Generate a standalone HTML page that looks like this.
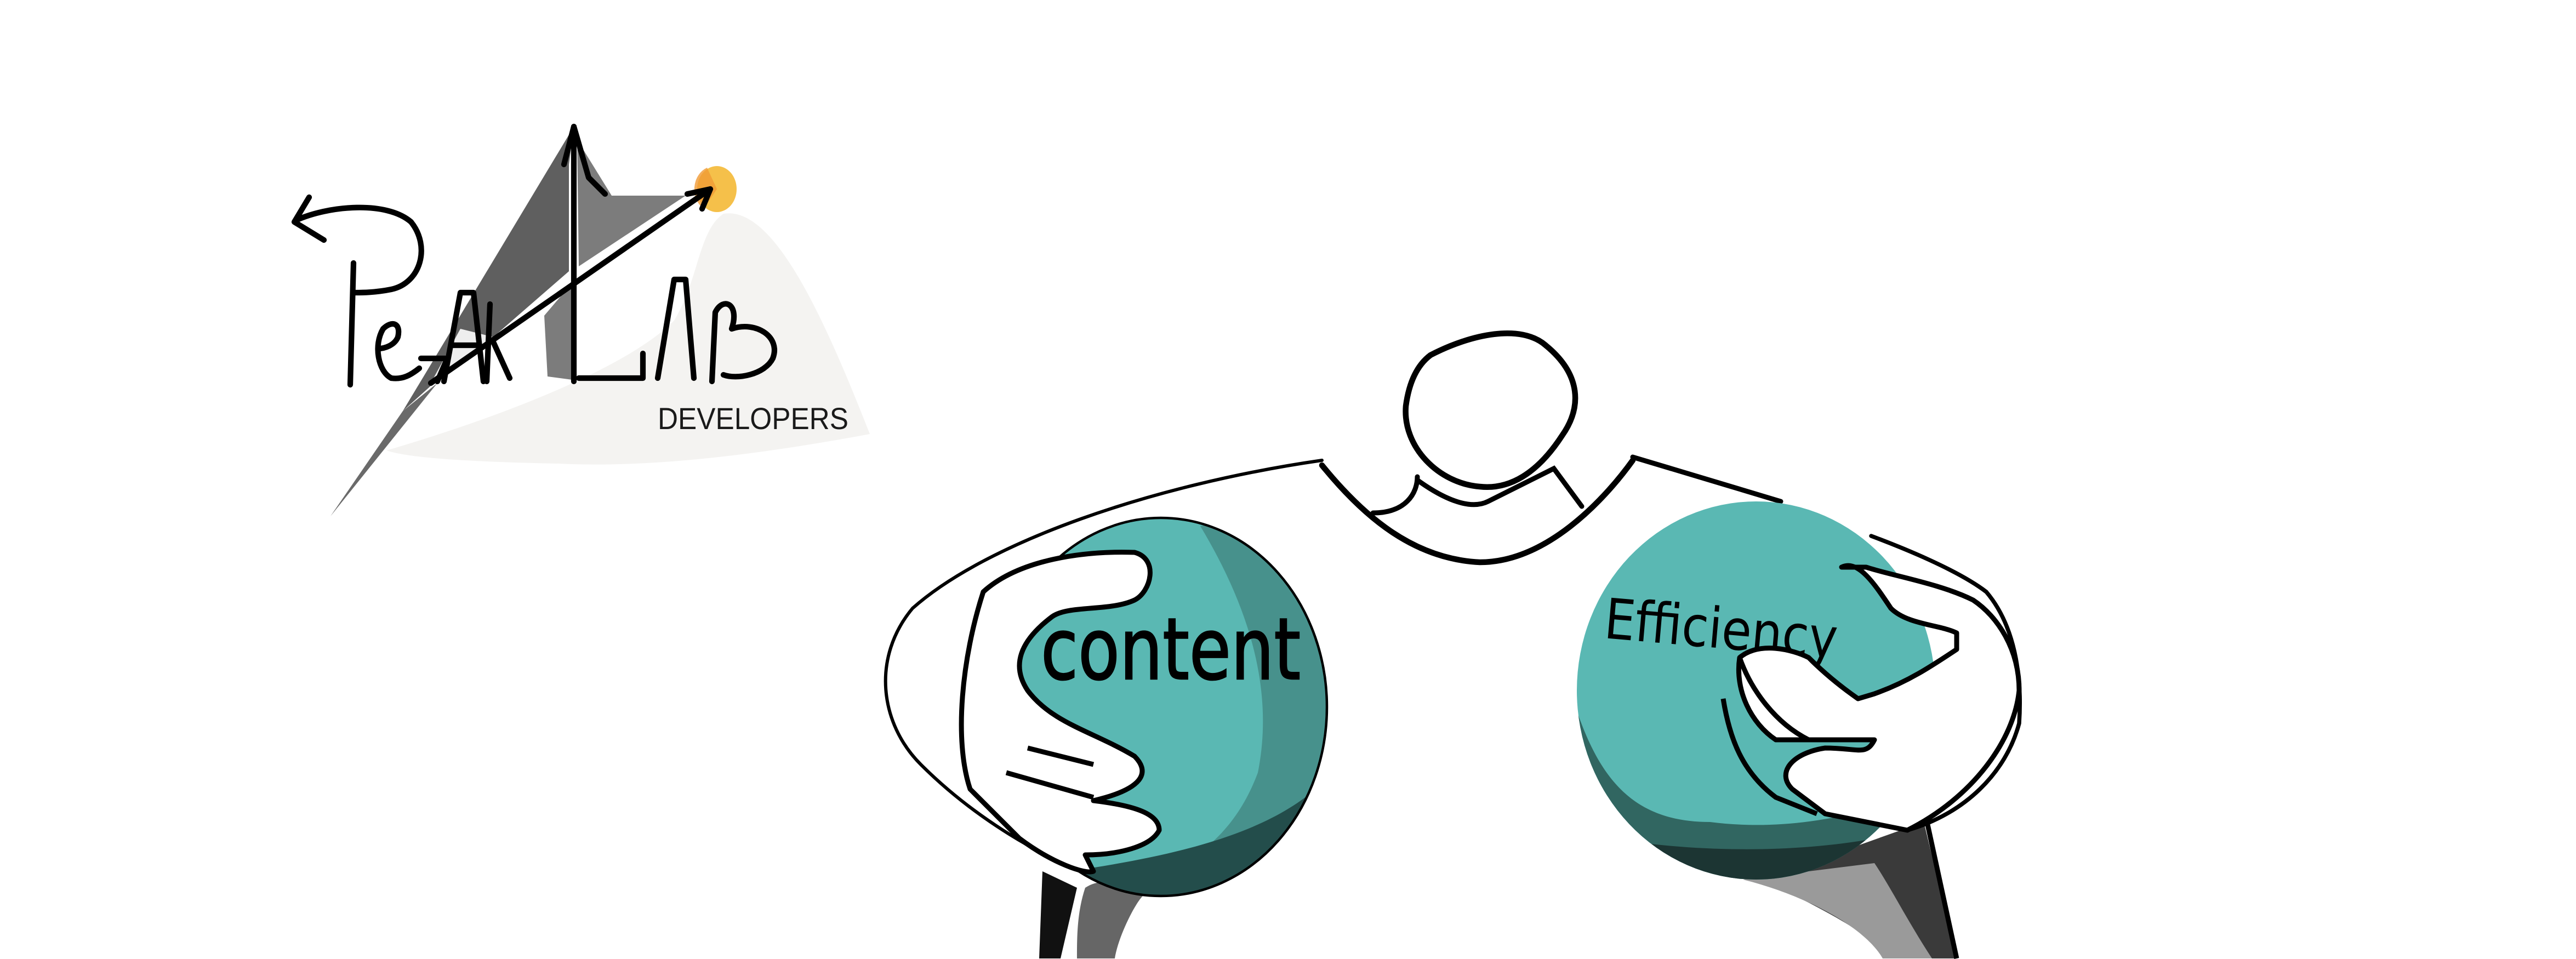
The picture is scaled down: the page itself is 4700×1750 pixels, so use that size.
<!DOCTYPE html>
<html><head><meta charset="utf-8"><style>
html,body{margin:0;padding:0;background:#fff;width:4700px;height:1750px;overflow:hidden}
svg{display:block}
</style></head><body>
<svg width="4700" height="1750" viewBox="0 0 1566.67 583.33" xmlns="http://www.w3.org/2000/svg">
<rect width="1566.67" height="583.33" fill="#fff"/>
<!-- LOGO -->
<path d="M235,274 C300,255 380,225 410,195 C425,170 425,140 440,130 C470,125 500,190 529,264 C470,275 400,285 340,282 C290,281 250,279 235,274Z" fill="#f4f3f1"/>
<polygon points="349,77 346,100 346,165 300,205 265,232 245,250" fill="#5f5f5f"/>
<polygon points="245,250 201,314 266,233" fill="#6a6a6a"/>
<polygon points="351,85 372,119 417,119 352,162" fill="#7c7c7c"/>
<polygon points="331,192 348,172 348,231 333,229" fill="#7c7c7c"/>
<polygon points="262,233 280,200 300,205" fill="#eee"/>
<ellipse cx="436" cy="115" rx="12" ry="14" fill="#f5c04a"/>
<path d="M430,102 A12,14 0 0 0 428,127 L436,115Z" fill="#f09a35" opacity=".8"/>
<g fill="none" stroke="#000" stroke-width="3.4" stroke-linecap="round" stroke-linejoin="round">
<path d="M349,77 L349,232"/>
<path d="M349,77 L343,100 M349,77 L358,108 L368,118"/>
<path d="M262,233 L432,115"/>
<path d="M418,118 L432,115 L427,127"/>
<path d="M256,218 L272,218 L266,232"/>
<path d="M215,160 L213,234"/>
<path d="M188,120 L179,135 L197,146 M180,134 C200,125 235,122 250,135 C262,150 256,172 238,176 C228,178 220,178 216,178"/>
<path d="M238,230 C230,226 227,210 233,200 C238,195 244,196 242,205 C240,210 234,212 230,212"/>
<path d="M238,230 C245,231 250,228 255,224"/>
<path d="M270,232 L280,178 L288,178 L294,232 M275,210 L290,210"/>
<path d="M296,232 L298,185 M300,208 L310,230"/>
<path d="M352,230 L391,230 L391,215"/>
<path d="M400,230 L410,170 L417,170 L422,230"/>
<path d="M433,232 L435,190 C440,180 450,185 445,200 C460,195 475,205 470,218 C465,228 448,231 440,228"/>
</g>
<text x="400" y="261" font-family="Liberation Sans, sans-serif" font-size="18.5" fill="#1a1a1a" textLength="116" lengthAdjust="spacingAndGlyphs">DEVELOPERS</text>
<!-- LEGS -->
<path d="M634,530 L632,583 L645,583 L655,540Z" fill="#111"/>
<path d="M660,540 C675,530 690,545 695,545 C690,550 680,570 678,583 L655,583 C655,570 655,555 660,540Z" fill="#666"/>
<path d="M1040,520 C1080,540 1130,560 1150,583 L1190,583 L1170,500 L1100,525Z" fill="#3a3a3a"/>
<path d="M1060,535 C1100,545 1135,565 1145,583 L1175,583 C1160,560 1150,540 1140,525Z" fill="#9a9a9a"/>
<path d="M1172,500 L1190,583" stroke="#000" stroke-width="3"/>
<!-- BODY -->
<path d="M804,279 C700,295 600,330 555,370 C530,400 535,440 560,465 C590,495 630,520 660,530 L700,535 L1160,505 C1200,480 1230,450 1230,410 C1228,380 1215,360 1200,352 C1180,340 1160,332 1140,325 L1083,305 L993,278Z" fill="#fff"/>
<g fill="none" stroke="#000" stroke-linecap="round">
<path d="M804,280 C700,295 600,330 555,370 C530,400 535,440 560,465 C590,495 630,520 660,530" stroke-width="2"/>
<path d="M993,278 L1083,305" stroke-width="3"/>
<path d="M1138,326 C1170,338 1195,350 1208,360 C1225,380 1230,410 1228,440 C1220,470 1195,495 1160,505" stroke-width="2.5"/>
<path d="M804,283 C830,315 860,340 900,342 C940,342 975,305 993,280" stroke-width="3.5"/>
<path d="M835,312 C855,312 862,300 862,290 M862,292 C880,305 895,310 905,305 L945,285 L962,308" stroke-width="3"/>
<path d="M870,216 C895,203 925,197 940,210 C962,228 962,248 950,265 C935,288 918,298 900,296 C875,294 853,272 855,247 C857,232 862,222 870,216Z" stroke-width="3.5"/>
</g>
<!-- BALLS -->
<defs><clipPath id="lb"><ellipse cx="706" cy="430" rx="101" ry="115"/></clipPath>
<clipPath id="rb"><ellipse cx="1068" cy="420" rx="109" ry="115"/></clipPath></defs>
<ellipse cx="706" cy="430" rx="101" ry="115" fill="#5ab8b3"/>
<g clip-path="url(#lb)">
<path d="M730,320 C760,370 775,420 765,470 C750,510 720,535 660,545 L830,560 L830,300Z" fill="#47918c"/>
<path d="M650,530 C720,520 780,505 810,470 L820,560 L640,560Z" fill="#234d4b"/>
</g>
<ellipse cx="706" cy="430" rx="101" ry="115" fill="none" stroke="#000" stroke-width="1.5"/>
<ellipse cx="1068" cy="420" rx="109" ry="115" fill="#5ab8b3"/>
<g clip-path="url(#rb)">
<path d="M955,420 C970,470 990,500 1040,500 C1080,505 1120,500 1180,480 L1180,560 L950,560Z" fill="#316661"/>
<path d="M980,510 C1040,520 1120,520 1180,500 L1180,560 L960,560Z" fill="#1c3533"/>
</g>
<text x="633" y="413" font-family="DejaVu Sans Condensed, Liberation Sans, sans-serif" font-size="52" fill="#000" stroke="#000" stroke-width="0.8" textLength="158" lengthAdjust="spacingAndGlyphs">content</text>
<text x="975" y="388" font-family="DejaVu Sans Condensed, Liberation Sans, sans-serif" font-size="34" fill="#000" transform="rotate(5 975 388)" textLength="142" lengthAdjust="spacingAndGlyphs">Efficiency</text>
<!-- LEFT HAND -->
<g fill="#fff" stroke="#000" stroke-width="3" stroke-linejoin="round">
<path d="M598,360 C620,340 660,335 690,336 C705,340 700,360 690,365 C675,372 650,368 640,375 C620,390 615,405 625,420 C640,440 665,445 690,460 C700,470 695,480 665,487 C690,490 705,495 705,505 C700,515 680,520 660,520 L665,530 C660,532 640,525 620,510 L590,480 C580,450 585,400 598,360Z"/>
<path d="M625,455 L665,465 M612,470 L665,485" fill="none"/>
</g>
<!-- RIGHT HAND -->
<g fill="#fff" stroke="#000" stroke-width="3" stroke-linejoin="round">
<path d="M1120,345 C1130,340 1140,355 1150,370 C1160,380 1180,380 1190,385 L1190,395 C1175,405 1160,415 1140,422 L1130,425 C1120,418 1110,410 1100,400 C1090,395 1070,390 1058,400 C1055,420 1065,440 1080,450 L1140,450 C1135,460 1130,455 1110,455 C1090,458 1080,470 1090,480 L1110,495 L1160,505 C1200,485 1225,450 1228,420 C1228,395 1215,375 1200,365 C1180,355 1150,350 1135,345Z"/>
<path d="M1048,425 C1052,450 1060,470 1080,485 L1105,495 M1058,400 C1065,420 1080,440 1100,450" fill="none"/>
</g>
</svg>
</body></html>
